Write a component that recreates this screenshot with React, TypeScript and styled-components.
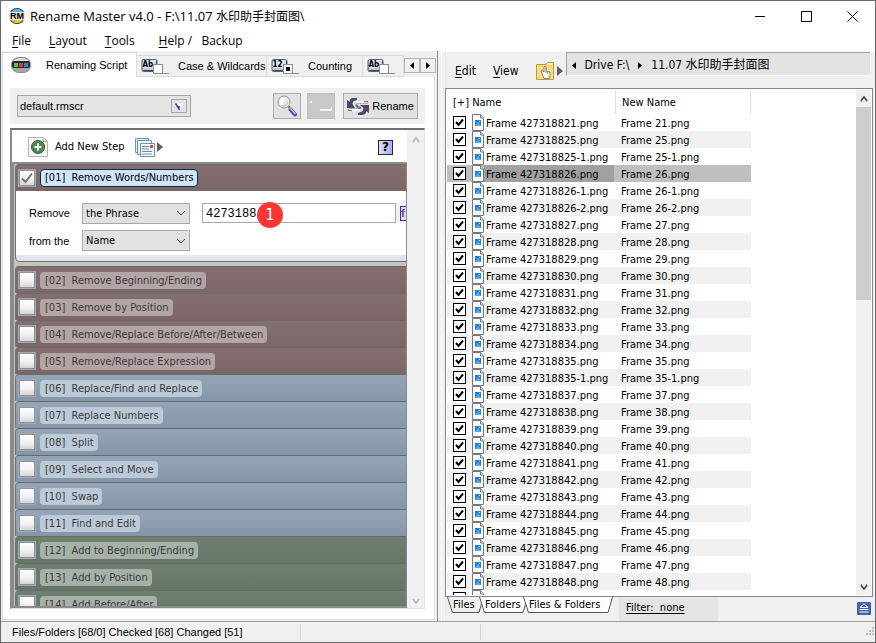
import React, { useState } from "react";
import styled, { createGlobalStyle, css } from "styled-components";

const uiFont = '"DejaVu Sans Condensed", "Noto Sans", "Noto Sans CJK SC", sans-serif';
const titleFont = '"Open Sans", "Noto Sans", "Noto Sans CJK SC", sans-serif';
const formFont = '"Liberation Sans", "Noto Sans CJK SC", sans-serif';

const GlobalStyle = createGlobalStyle`
  *, *::before, *::after { box-sizing: border-box; }
  body { margin: 0; background: #f0f0f0; color: #000; font: 11px/14px ${uiFont}; }
  button, input, select { font: inherit; color: inherit; margin: 0; padding: 0; border-radius: 0; }
  button { border: 0; background: none; white-space: nowrap; }
  svg { display: block; flex: none; }
`;

const Window = styled.div`
  display: flex;
  flex-direction: column;
  height: 100vh;
  overflow: hidden;
  border: 1px solid #6b6b6d;
  background: #f0f0f0;
`;

const TitleBar = styled.header`
  display: flex;
  align-items: center;
  flex: none;
  height: 30px;
  padding-left: 8px;
  gap: 5px;
  background: #fff;
  font: 13px/16px ${titleFont};
`;

const Title = styled.h1`
  flex: 1;
  margin: 0;
  font: inherit;
  white-space: nowrap;
`;

const Folder = styled.span`
  font-size: 12px;
`;

const CaptionButton = styled.button`
  display: flex;
  align-items: center;
  justify-content: center;
  width: 46px;
  height: 28px;
  margin-left: -5px;
`;

const MenuBar = styled.nav`
  display: flex;
  flex: none;
  height: 20px;
  padding-left: 11px;
  gap: 18px;
  background: #fff;
  font: 12px/18px ${titleFont};
`;

const HelpMenu = styled.button`
  margin-left: 6px;
`;

const Key = styled.span`
  text-decoration: underline;
  text-underline-offset: 2px;
`;

const Workspace = styled.main`
  display: grid;
  grid-template-columns: minmax(0, 1fr) minmax(0, 1fr);
  flex: 1;
  min-height: 0;
  border-bottom: 1px solid #a0a0a0;
`;

const LeftPane = styled.section`
  display: flex;
  flex-direction: column;
  min-width: 0;
  min-height: 0;
  padding: 1px 2px 1px 1px;
  border-right: 1px solid #8a8d93;
`;

const TabStrip = styled.div`
  display: flex;
  align-items: flex-end;
  flex: none;
  height: 25px;
  font: 11px/14px ${formFont};
`;

const Tab = styled.button<{ $active?: boolean; $width: number; $gap: number }>`
  display: flex;
  align-items: center;
  flex: none;
  overflow: hidden;
  width: ${(p) => p.$width}px;
  height: ${(p) => (p.$active ? 25 : 22)}px;
  padding-left: ${(p) => (p.$active ? 8 : 4)}px;
  gap: ${(p) => p.$gap}px;
  background: ${(p) => (p.$active ? "#fff" : "#f0f0f0")};
  border: 1px solid #dcdcdc;
  border-left-width: ${(p) => (p.$active ? 1 : 0)}px;
  border-bottom-width: ${(p) => (p.$active ? 0 : 1)}px;
`;

const TabScroll = styled.div`
  display: flex;
  align-self: center;
  margin-left: auto;
  padding-top: 2px;
`;

const TabScrollButton = styled.button`
  display: flex;
  align-items: center;
  justify-content: center;
  width: 16px;
  height: 15px;
  border: 1px solid #b4b4b4;
`;

const TabPage = styled.div`
  display: flex;
  flex-direction: column;
  flex: 1;
  min-height: 0;
  padding: 11px 9px 10px 7px;
  gap: 4px;
  background: #fff;
  border: 1px solid #dcdcdc;
  border-top: 0;
`;

const ScriptBar = styled.div`
  display: flex;
  align-items: center;
  flex: none;
  height: 36px;
  padding: 0 7px;
  gap: 6px;
  background: #f0f0f0;
  font: 11px/14px ${formFont};
`;

const ScriptCombo = styled.div`
  display: flex;
  align-items: center;
  width: 174px;
  height: 22px;
  margin-right: auto;
  padding: 0 3px 0 2px;
  background: #e4e4e4;
  border: 1px solid #a6a6a6;
`;

const ComboInput = styled.input`
  flex: 1;
  min-width: 0;
  border: 0;
  background: none;
  outline: 0;
`;

const ComboButton = styled.button`
  display: flex;
  align-items: center;
  justify-content: center;
  width: 16px;
  height: 14px;
  border: 1px solid #a6a6a6;
`;

const ToolButton = styled.button<{ $wide?: boolean }>`
  display: flex;
  align-items: center;
  justify-content: center;
  width: ${(p) => (p.$wide ? 75 : 28)}px;
  height: 26px;
  gap: 3px;
  margin-left: ${(p) => (p.$wide ? 2 : 0)}px;
  background: #e1e1e1;
  border: 1px solid #adadad;
  &:disabled { background: #c8c8c8; border-color: #bfbfbf; }
`;

const ScriptFrame = styled.div`
  display: flex;
  flex: 1;
  min-height: 0;
  border: 1px solid #e3e3e3;
  border-top: 2px solid #6e6e6e;
  border-left: 2px solid #8a8a8a;
`;

const ScriptColumn = styled.div`
  display: flex;
  flex-direction: column;
  flex: 1;
  min-width: 0;
`;

const StepToolbar = styled.div`
  display: flex;
  align-items: center;
  flex: none;
  height: 32px;
  padding: 2px 14px 0 16px;
`;

const FlatButton = styled.button<{ $gap: number }>`
  display: flex;
  align-items: center;
  gap: ${(p) => p.$gap}px;
  margin-right: 10px;
  line-height: 16px;
`;

const HelpButton = styled.button`
  width: 15px;
  height: 15px;
  margin-left: auto;
  border: 1px solid #22223a;
  background: linear-gradient(90deg, #e2d9f7, #a9b0ee);
  font: bold 12px/12px "DejaVu Sans", sans-serif;
`;

const StepList = styled.div`
  flex: 1;
  min-height: 0;
  overflow: hidden;
  padding-left: 1px;
  background: #c3c3c0;
  border: 2px solid #8c8c8c;
  border-right: 1px solid #8c8c8c;
  box-shadow: 1px 0 0 #c8c8c8;
  color: #3b3b3b;
`;

const tones = {
  brown: ["#846e70", "#7b6668", "#b3a4a5"],
  blue: ["#93a5b6", "#8496a7", "#bcc9d6"],
  green: ["#6f7f70", "#667666", "#a6b1a8"],
};
type Tone = keyof typeof tones;

const StepRow = styled.div<{ $tone: Tone }>`
  display: flex;
  align-items: center;
  height: 27px;
  padding: 1px 2px;
  gap: 4px;
  border-top: 1px solid #6c6969;
  border-left: 1px solid #747474;
  border-top-left-radius: 4px;
  background: linear-gradient(${(p) => tones[p.$tone][0]}, ${(p) => tones[p.$tone][1]});
`;

const StepCheck = styled.input`
  appearance: none;
  flex: none;
  width: 18px;
  height: 18px;
  border: 2px solid #8f9399;
  outline: 1px solid #9caab5;
  outline-offset: -1px;
  background: linear-gradient(#fff, #f1f1f1 55%, #d5d5d5);
`;

const CheckHolder = styled.span`
  display: grid;
  > * { grid-area: 1 / 1; place-self: center; }
  svg { pointer-events: none; }
`;

const StepLabel = styled.label<{ $tone: Tone; $active?: boolean }>`
  height: 17px;
  padding: 0 4px 0 5px;
  border-radius: 4px;
  line-height: 17px;
  white-space: pre;
  background: ${(p) => tones[p.$tone][2]};
  ${(p) =>
    p.$active &&
    css`
      height: 18px;
      padding: 0 3px 0 4px;
      line-height: 16px;
      color: #000;
      background: #cfe5f9;
      border: 1px solid #0e2a45;
    `}
`;

const StepBody = styled.div`
  display: grid;
  grid-template-columns: 49px 108px minmax(0, 1fr);
  column-gap: 4px;
  align-items: center;
  height: 71px;
  margin-bottom: 4px;
  padding: 8px 0 6px 13px;
  grid-template-rows: 28px 27px;
  color: #000;
  background: linear-gradient(#fff 64px, #e2e2f0 64px);
  border-left: 1px solid #747474;
  border-bottom: 1px solid #6c6c6c;
  border-bottom-left-radius: 5px;
`;

const FormLabel = styled.label`
  font: 11px/14px ${formFont};
`;

const SelectBox = styled.span`
  display: grid;
  align-items: center;
  > * { grid-area: 1 / 1; }
  svg { justify-self: end; margin-right: 4px; pointer-events: none; }
`;

const Select = styled.select`
  appearance: none;
  width: 100%;
  height: 21px;
  padding: 1px 0 0 3px;
  border: 1px solid #a9a9a9;
  background: #e1e1e1;
`;

const PhraseField = styled.div`
  position: relative;
  display: flex;
  align-items: center;
  gap: 4px;
  margin-left: 8px;
  background: #f2f2f2;
`;

const PhraseInput = styled.input`
  flex: 1;
  min-width: 0;
  height: 20px;
  padding: 2px 3px 0;
  border: 1px solid #a5a8ae;
  background: #fff;
  font: 12px/16px "Liberation Mono", monospace;
`;

const FunctionButton = styled.button`
  width: 6px;
  height: 15px;
  overflow: hidden;
  border: 1px solid #542a80;
  border-right: 0;
  background: #e0dcf6;
  color: #5549c4;
  font: bold 11px/12px ${formFont};
  text-align: left;
`;

const Marker = styled.span`
  position: absolute;
  left: 55px;
  top: -1px;
  width: 26px;
  height: 26px;
  border-radius: 50%;
  background: #fb3735;
  color: #fff;
  font: 15px/26px "DejaVu Sans", sans-serif;
  text-align: center;
`;

const ScrollTrack = styled.div<{ $faint?: boolean }>`
  display: flex;
  flex-direction: column;
  align-items: center;
  flex: none;
  width: ${(p) => (p.$faint ? 17 : 15)}px;
  padding: ${(p) => (p.$faint ? "7px 0 4px" : "6px 0 5px")};
  background: #f0f0f0;
  color: ${(p) => (p.$faint ? "#bcbcbc" : "#505050")};
`;

const ScrollThumb = styled.div`
  width: 15px;
  height: 39%;
  margin-top: 5px;
  background: #cdcdcd;
`;

const Grow = styled.span`
  flex: 1;
`;

const RightPane = styled.section`
  display: flex;
  flex-direction: column;
  min-width: 0;
  min-height: 0;
  margin-left: 3px;
  padding: 0 2px 0 3px;
  border-left: 1px solid #fff;
  border-top: 1px solid #fafafa;
`;

const FileToolbar = styled.div`
  display: flex;
  flex: none;
  height: 36px;
  padding: 0 2px 0 10px;
`;

const ToolbarItems = styled.div`
  display: flex;
  align-items: center;
  padding-top: 1px;
`;

const ToolbarButton = styled.button`
  display: flex;
  align-items: center;
  gap: 3px;
  margin-right: 17px;
  font-size: 12px;
  &:last-child { margin: 0 3px 0 0; }
`;

const PathBar = styled.div`
  display: flex;
  align-items: center;
  flex: 1;
  height: 24px;
  padding: 2px 0 0 5px;
  gap: 9px;
  border: 1px solid #a4a4a4;
  border-right-color: #fff;
  border-bottom-color: #fff;
  background: #e3e3e3;
  font-size: 12px;
`;

const FileList = styled.div`
  display: flex;
  flex: 1;
  min-height: 0;
  padding: 1px;
  border: 1px solid #828790;
  background: #fff;
`;

const TableArea = styled.div`
  flex: 1;
  min-width: 0;
  overflow: hidden;
`;

const Table = styled.table`
  width: 304px;
  table-layout: fixed;
  border-collapse: separate;
  border-spacing: 0;
`;

const HeadCell = styled.th<{ $width: number }>`
  width: ${(p) => p.$width}px;
  height: 24px;
  padding: 1px 5px 0 6px;
  border-right: 1px solid #e0e0e0;
  text-align: left;
  font-weight: normal;
`;

const FileRow = styled.tr<{ $selected?: boolean }>`
  height: 17px;
  &:nth-child(even) { background: #f1f1f1; }
  ${(p) => p.$selected && css`&&:nth-child(even) { background: #bfbfbf; }`}
`;

const NameCell = styled.td`
  padding: 0 2px 0 6px;
`;

const NewCell = styled.td`
  padding: 2px 5px 0;
  line-height: 15px;
`;

const FileLine = styled.div`
  display: flex;
  align-items: center;
  height: 17px;
`;

const FileCheck = styled.input`
  appearance: none;
  width: 13px;
  height: 13px;
  border: 1px solid #000;
  background: #fff;
`;

const FileName = styled.label<{ $selected?: boolean }>`
  flex: 1;
  height: 17px;
  padding: 2px 0 0 2px;
  line-height: 15px;
  background: ${(p) => (p.$selected ? "#a0a0a0" : "transparent")};
`;

const FileIconBox = styled.span`
  margin-left: 6px;
`;

const FileFooter = styled.div`
  display: flex;
  flex: none;
  height: 24px;
  padding: 0 2px 0 2px;
`;

const SheetTab = styled.button<{ $width: number }>`
  display: grid;
  width: ${(p) => p.$width}px;
  height: 16px;
  margin-right: -5px;
  > * { grid-area: 1 / 1; }
  > span { place-self: center start; padding-left: 6px; }
`;

const Filter = styled.div`
  width: 99px;
  margin: 1px auto 0 11px;
  padding: 3px 7px;
  background: #e4e4e4;
`;

const FilterLink = styled.a`
  color: #000;
  white-space: pre;
  text-underline-offset: 2px;
`;

const EjectButton = styled.button`
  align-self: center;
  margin-top: -2px;
`;

const StatusBar = styled.footer`
  display: flex;
  align-items: center;
  flex: none;
  height: 20px;
  padding-left: 11px;
  font: 11px/14px ${formFont};
`;

const StatusCell = styled.div<{ $width?: number }>`
  flex: ${(p) => (p.$width ? "none" : 1)};
  width: ${(p) => (p.$width ? p.$width + "px" : "auto")};
  height: 16px;
  line-height: 17px;
  border-right: ${(p) => (p.$width ? "1px solid #d5d5d5" : "0")};
`;

const AppIcon = () => (
  <svg width="16" height="16" viewBox="0 0 16 16">
    <circle cx="8" cy="8" r="8" fill="#1d2a33" />
    <path d="M2 4a7.2 7.2 0 0 1 12 0z" fill="#55b4e4" />
    <path d="M2 12a7.2 7.2 0 0 0 12 0z" fill="#eec22e" />
    <rect y="4" width="16" height="8" fill="#ebe6d8" />
    <text x="8" y="11" textAnchor="middle" fontSize="9" fontWeight="bold" fontFamily="Liberation Sans">RM</text>
  </svg>
);

const LightsIcon = () => (
  <svg width="20" height="16" viewBox="0 0 20 16">
    <rect x=".5" y=".5" width="19" height="15" rx="7" fill="#a5a5a5" stroke="#8a8a8a" />
    <path d="M3 3q7-4 14 0l1 2H2z" fill="#ddd" />
    <rect x="1" y="4" width="18" height="7" rx="2" fill="#2c2c30" />
    <path d="M3 6h4v4H3z" fill="#3fd04a" />
    <path d="M8 6h4v4H8z" fill="#e0343a" />
    <path d="M13 6h4v4h-4z" fill="#2f86d8" />
  </svg>
);

const KeyIcon = ({ text, dot }: { text: string; dot?: boolean }) => (
  <svg width="28" height="16" viewBox="0 0 28 16">
    <rect x="1" y="1.5" width="15" height="12" rx="1.5" fill="#bfc7da" stroke="#566079" />
    <path d="M2 12.5h14M15.5 3v10" stroke="#3e4862" />
    <rect x="2" y="2" width="12.500" height="8" fill="#dfe4ef" />
    <text x="1.500" y="9" fontSize="8" fontWeight="bold" fontFamily="DejaVu Sans Condensed">{text}</text>
    <path d="M22 15.500h6M21.500 6v9" stroke="#8c8c8c" fill="none" />
    <rect x="12.500" y="6.500" width="9" height="9" fill="#fff" stroke="#8e8e8e" />
    {dot && <rect x="15" y="9" width="4" height="4" />}
  </svg>
);

const Triangle = ({ left, big }: { left?: boolean; big?: boolean }) =>
  big ? (
    <svg width="6" height="10" viewBox="0 0 6 10"><path d="M0 0l6 5-6 5z" fill="#5e5e5e" /></svg>
  ) : (
    <svg width="4" height="7" viewBox="0 0 4 7"><path d={left ? "M4 0v7L0 3.500z" : "M0 0l4 3.500L0 7z"} /></svg>
  );

const Chevron = ({ up, heavy }: { up?: boolean; heavy?: boolean }) => (
  <svg width={heavy ? 8 : 10} height="6" viewBox="0 0 10 6" preserveAspectRatio="none">
    <path d={up ? "M1 5l4-4 4 4" : "M1 1l4 4 4-4"} fill="none" stroke={heavy ? "currentColor" : "#4c4c4c"} strokeWidth={heavy ? 2 : 1} />
  </svg>
);

const SearchIcon = () => (
  <svg width="22" height="22" viewBox="0 0 22 22">
    <path d="M12 11l3 3" stroke="#666" strokeWidth="2" />
    <path d="M14.500 14.500l4.500 5" stroke="#5744ad" strokeWidth="4" strokeLinecap="round" />
    <path d="M14.500 13.500l5 5.500" stroke="#c0b6f4" strokeWidth="1.500" />
    <path d="M13 14l2-2" stroke="#d59a35" strokeWidth="2" />
    <circle cx="8" cy="7" r="6" fill="#e3e8ea" stroke="#9a9a9a" strokeWidth="1" />
    <path d="M4 7a4 4 0 0 1 6-4L5 11z" fill="#fff" />
    <path d="M5 11q5 1 7-4" stroke="#b4bec4" fill="none" />
  </svg>
);

const SwapIcon = () => (
  <svg width="22" height="20" viewBox="0 0 22 20">
    <path d="M9 6.500h12M1 13.500h12" stroke="#b0b0b0" strokeWidth="3" />
    <path d="M10 2H5Q2 3 3 6L0 4v8h8L6 9q-2-4 4-5z" fill="#4c4668" />
    <path d="M11 19h4q5-1 4-4l3 2V9h-9l3 2.500q2 4-5 5.500z" fill="#4c4668" />
    <path d="M9 6h11M2 14h11" stroke="#fff" strokeWidth="2" />
    <path d="M1 14.500h4" stroke="#3c9d4e" />
    <path d="M17 5.500h4" stroke="#ca4545" />
    <path d="M9 8.500q2 4 5 3" stroke="#6d6686" strokeWidth="2" fill="none" />
  </svg>
);

const AddIcon = () => (
  <svg width="20" height="20" viewBox="0 0 20 20">
    <path d="M.5.5H15l4.500 4v15H.5z" fill="#f6f6f6" stroke="#b4b4b4" />
    <path d="M15 .5v4h4.500" fill="#ddd" stroke="#b4b4b4" />
    <circle cx="10" cy="10" r="6.500" fill="#4b8a50" stroke="#2f5f36" />
    <path d="M10 6.500v7M6.500 10h7" stroke="#fff" strokeWidth="2" />
  </svg>
);

const PagesIcon = () => (
  <svg width="20" height="19" viewBox="0 0 20 19">
    <path d="M.5.5h13v14H.5z" fill="#e7f0f5" stroke="#6d93ad" />
    <path d="M2.500 2.500h14v14h-14z" fill="#eef5f8" stroke="#6d93ad" />
    <path d="M5.500 5.500h14v13h-14z" fill="#f7fbfd" stroke="#6d93ad" />
    <path d="M7 8.500h7M7 11h7M7 13.500h10M7 16h10" stroke="#7186b6" />
    <path d="M15 7h3v3h-3z" fill="#d2463e" />
  </svg>
);

const FolderIcon = () => (
  <svg width="18" height="18" viewBox="0 0 18 18">
    <path d="M.5 2.500H10l1.500-2h6v17H.5z" fill="#f5d667" stroke="#c39b34" />
    <path d="M1 5h16v12H1z" fill="#f9df82" />
    <path d="M11 1h5v2h-5z" fill="#e5edf0" />
    <path d="M5 9l1.500-.5L8 10V5q1-1.500 2 0v4l4 1v4l-1 2.500H8z" fill="#fff" stroke="#7d7d7d" />
    <path d="M11.500 10v2M9.800 9v2" stroke="#999" />
  </svg>
);

const FileIcon = () => (
  <svg width="12" height="17" viewBox="0 0 12 17">
    <path d="M.5.5h8l3 3.500v12.500H.5z" fill="#fff" stroke="#777" />
    <path d="M8.500.5V4h3" fill="#e5e5e5" stroke="#777" />
    <rect x="3" y="6" width="6" height="6" fill="#1f7fdc" />
    <path d="M3 12l3-4 3 4z" fill="#55aaf0" />
    <path d="M7 7h1v1H7z" fill="#fff" />
  </svg>
);

const EjectIcon = () => (
  <svg width="14" height="13" viewBox="0 0 14 13">
    <rect width="14" height="13" rx="1" fill="#3f64ad" />
    <path d="M3 5.500L7 1.800l4 3.700z" fill="none" stroke="#fff" />
    <path d="M2.500 7.500h9M2.500 10h9" stroke="#fff" />
  </svg>
);

const SheetShape = ({ width, active }: { width: number; active?: boolean }) => (
  <svg width={width} height="16" viewBox={`0 0 ${width} 16`}>
    <path d={`M.5 0l5 15.500H${width - 5}L${width - 0.5} 0`} fill={active ? "#f0f0f0" : "#fff"} stroke="#555" />
  </svg>
);

const steps: [string, string, Tone][] = [
  ["02", "Remove Beginning/Ending", "brown"],
  ["03", "Remove by Position", "brown"],
  ["04", "Remove/Replace Before/After/Between", "brown"],
  ["05", "Remove/Replace Expression", "brown"],
  ["06", "Replace/Find and Replace", "blue"],
  ["07", "Replace Numbers", "blue"],
  ["08", "Split", "blue"],
  ["09", "Select and Move", "blue"],
  ["10", "Swap", "blue"],
  ["11", "Find and Edit", "blue"],
  ["12", "Add to Beginning/Ending", "green"],
  ["13", "Add by Position", "green"],
  ["14", "Add Before/After", "green"],
];

const suffixes = [
  "21", "25", "25-1", "26", "26-1", "26-2", "27", "28", "29", "30", "31", "32", "33", "34", "35", "35-1",
  "37", "38", "39", "40", "41", "42", "43", "44", "45", "46", "47", "48", "49",
];

const prefix = "4273188";

function Step({ id, name, tone, active }: { id: string; name: string; tone: Tone; active?: boolean }) {
  const [on, setOn] = useState(!!active);
  return (
    <StepRow $tone={tone}>
      <CheckHolder>
        <StepCheck type="checkbox" id={`step-${id}`} checked={on} onChange={() => setOn(!on)} />
        {on && (
          <svg width="12" height="12" viewBox="0 0 12 12">
            <path d="M1 6.500L4.500 10 11 1.500" fill="none" stroke="#757575" strokeWidth="2" />
          </svg>
        )}
      </CheckHolder>
      <StepLabel htmlFor={`step-${id}`} $tone={tone} $active={active}>{`[${id}]  ${name}`}</StepLabel>
    </StepRow>
  );
}

function File({ suffix, selected }: { suffix: string; selected?: boolean }) {
  const [on, setOn] = useState(true);
  const id = `file-${suffix}`;
  return (
    <FileRow $selected={selected}>
      <NameCell>
        <FileLine>
          <CheckHolder>
            <FileCheck type="checkbox" id={id} checked={on} onChange={() => setOn(!on)} />
            {on && (
              <svg width="9" height="9" viewBox="0 0 9 9">
                <path d="M1 4l2.500 3L8 1.500" fill="none" stroke="#000" strokeWidth="2" />
              </svg>
            )}
          </CheckHolder>
          <FileIconBox><FileIcon /></FileIconBox>
          <FileName htmlFor={id} $selected={selected}>{`Frame ${prefix}${suffix}.png`}</FileName>
        </FileLine>
      </NameCell>
      <NewCell>{`Frame ${suffix}.png`}</NewCell>
    </FileRow>
  );
}

export default function App() {
  return (
    <>
      <GlobalStyle />
      <Window>
        <TitleBar>
          <AppIcon />
          <Title>Rename Master v4.0 - F:\11.07 <Folder>水印助手封面图\</Folder></Title>
          <CaptionButton aria-label="Minimize">
            <svg width="10" height="10"><path d="M0 5.500h10" stroke="#000" /></svg>
          </CaptionButton>
          <CaptionButton aria-label="Maximize">
            <svg width="11" height="11"><path d="M.5.5h10v10H.5z" stroke="#000" fill="none" /></svg>
          </CaptionButton>
          <CaptionButton aria-label="Close">
            <svg width="11" height="11"><path d="M.5.5l10 10M10.500.5l-10 10" stroke="#000" /></svg>
          </CaptionButton>
        </TitleBar>
        <MenuBar>
          <button><Key>F</Key>ile</button>
          <button><Key>L</Key>ayout</button>
          <button><Key>T</Key>ools</button>
          <HelpMenu><Key>H</Key>elp /&nbsp;&nbsp; Backup</HelpMenu>
        </MenuBar>
        <Workspace>
          <LeftPane>
            <TabStrip>
              <Tab $active $width={135} $gap={15}><LightsIcon />Renaming Script</Tab>
              <Tab $width={130} $gap={9}><KeyIcon text="Ab" />Case &amp; Wildcards</Tab>
              <Tab $width={96} $gap={9}><KeyIcon text="12" dot />Counting</Tab>
              <Tab $width={41} $gap={8} aria-label="More"><KeyIcon text="Ab" /></Tab>
              <TabScroll>
                <TabScrollButton aria-label="Previous tabs"><Triangle left /></TabScrollButton>
                <TabScrollButton aria-label="Next tabs"><Triangle /></TabScrollButton>
              </TabScroll>
            </TabStrip>
            <TabPage>
              <ScriptBar>
                <ScriptCombo>
                  <ComboInput aria-label="Script file" defaultValue="default.rmscr" />
                  <ComboButton aria-label="Choose script">
                    <svg width="8" height="7" viewBox="0 0 8 7">
                      <path d="M0 .5h8L4.500 7z" fill="#fff" />
                      <path d="M.5.5L4 6V3" fill="none" stroke="#5b21d6" strokeWidth="1.500" />
                    </svg>
                  </ComboButton>
                </ScriptCombo>
                <ToolButton aria-label="Preview"><SearchIcon /></ToolButton>
                <ToolButton disabled aria-label="Undo">
                  <svg width="22" height="12"><path d="M0 1h2v2H0zM10 9h11V7h1v4H10z" fill="#f2f2f2" /></svg>
                </ToolButton>
                <ToolButton $wide><SwapIcon />Rename</ToolButton>
              </ScriptBar>
              <ScriptFrame>
                <ScriptColumn>
                  <StepToolbar>
                    <FlatButton $gap={7}><AddIcon />Add New Step</FlatButton>
                    <FlatButton $gap={2} aria-label="Script templates"><PagesIcon /><Triangle big /></FlatButton>
                    <HelpButton>?</HelpButton>
                  </StepToolbar>
                  <StepList>
                    <Step id="01" name="Remove Words/Numbers" tone="brown" active />
                    <StepBody>
                      <FormLabel htmlFor="what">Remove</FormLabel>
                      <SelectBox>
                        <Select id="what"><option>the Phrase</option></Select>
                        <Chevron />
                      </SelectBox>
                      <PhraseField>
                        <PhraseInput aria-label="Phrase" defaultValue={prefix} />
                        <FunctionButton aria-label="Insert field">f</FunctionButton>
                        <Marker>1</Marker>
                      </PhraseField>
                      <FormLabel htmlFor="where">from the</FormLabel>
                      <SelectBox>
                        <Select id="where"><option>Name</option></Select>
                        <Chevron />
                      </SelectBox>
                    </StepBody>
                    {steps.map(([id, name, tone]) => (
                      <Step key={id} id={id} name={name} tone={tone} />
                    ))}
                  </StepList>
                </ScriptColumn>
                <ScrollTrack $faint>
                  <Chevron up heavy />
                  <Grow />
                  <Chevron heavy />
                </ScrollTrack>
              </ScriptFrame>
            </TabPage>
          </LeftPane>
          <RightPane>
            <FileToolbar>
              <ToolbarItems>
                <ToolbarButton><span><Key>E</Key>dit</span></ToolbarButton>
                <ToolbarButton><span><Key>V</Key>iew</span></ToolbarButton>
                <ToolbarButton aria-label="Browse folders"><FolderIcon /><Triangle big /></ToolbarButton>
              </ToolbarItems>
              <PathBar>
                <Triangle left />
                <span>Drive F:\</span>
                <Triangle />
                <span>11.07 水印助手封面图</span>
              </PathBar>
            </FileToolbar>
            <FileList>
              <TableArea>
                <Table>
                  <thead>
                    <tr>
                      <HeadCell $width={169}>[+] Name</HeadCell>
                      <HeadCell $width={135}>New Name</HeadCell>
                    </tr>
                  </thead>
                  <tbody>
                    {suffixes.map((s) => (
                      <File key={s} suffix={s} selected={s === "26"} />
                    ))}
                  </tbody>
                </Table>
              </TableArea>
              <ScrollTrack>
                <Chevron up heavy />
                <ScrollThumb />
                <Grow />
                <Chevron heavy />
              </ScrollTrack>
            </FileList>
            <FileFooter>
              <SheetTab $width={37}><SheetShape width={37} active /><span>Files</span></SheetTab>
              <SheetTab $width={49}><SheetShape width={49} /><span>Folders</span></SheetTab>
              <SheetTab $width={90}><SheetShape width={90} /><span>Files &amp; Folders</span></SheetTab>
              <Filter><FilterLink href="#filter">{"Filter:  none"}</FilterLink></Filter>
              <EjectButton aria-label="Collapse panel"><EjectIcon /></EjectButton>
            </FileFooter>
          </RightPane>
        </Workspace>
        <StatusBar>
          <StatusCell $width={289}>Files/Folders [68/0] Checked [68] Changed [51]</StatusCell>
          <StatusCell $width={180} />
          <StatusCell />
          <svg width="10" height="10" viewBox="0 0 10 10">
            <path d="M7 0h2v2H7zM7 3h2v2H7zM4 3h2v2H4zM7 6h2v2H7zM4 6h2v2H4zM1 6h2v2H1z" fill="#bdbdbd" />
          </svg>
        </StatusBar>
      </Window>
    </>
  );
}
